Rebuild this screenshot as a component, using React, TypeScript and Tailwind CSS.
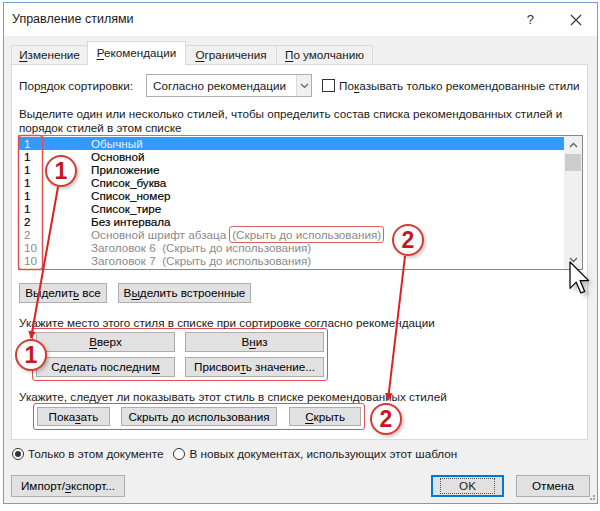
import React from "react";

const BTN =
  "h-[20px] border border-[#adadad] bg-[#e1e1e1] text-black flex items-center justify-center leading-none whitespace-nowrap";

function U({ children }: { children: React.ReactNode }) {
  return <span className="underline underline-offset-2">{children}</span>;
}

const ROWS: { n: string; name: string; note?: string; tone: "sel" | "dark" | "gray"; box?: boolean }[] = [
  { n: "1", name: "Обычный", tone: "sel" },
  { n: "1", name: "Основной", tone: "dark" },
  { n: "1", name: "Приложение", tone: "dark" },
  { n: "1", name: "Список_буква", tone: "dark" },
  { n: "1", name: "Список_номер", tone: "dark" },
  { n: "1", name: "Список_тире", tone: "dark" },
  { n: "2", name: "Без интервала", tone: "dark" },
  { n: "2", name: "Основной шрифт абзаца", note: "(Скрыть до использования)", tone: "gray", box: true },
  { n: "10", name: "Заголовок 6", note: "  (Скрыть до использования)", tone: "gray" },
  { n: "10", name: "Заголовок 7", note: "  (Скрыть до использования)", tone: "gray" },
];

function Badge({ x, y, label }: { x: number; y: number; label: string }) {
  return (
    <g>
      <circle cx={x + 2} cy={y + 2} r={16} fill="#000" opacity={0.2} filter="url(#blur)" />
      <circle cx={x} cy={y} r={15} fill="#fff" stroke="#d63a32" strokeWidth={2} />
      <text
        x={x}
        y={y + 8}
        textAnchor="middle"
        fontFamily="Liberation Sans, Arial, sans-serif"
        fontWeight={700}
        fontSize={23}
        fill="#c8161d"
      >
        {label}
      </text>
    </g>
  );
}

export default function App() {
  return (
    <div className="relative w-[600px] h-[511px] bg-white font-['Liberation_Sans',Arial,sans-serif] text-[11.7px] text-[#1a1a1a] overflow-hidden">
      {/* Window */}
      <div className="ml-[3px] mt-[2px] w-[595px] h-[502px] border border-[#6b9fd8] flex flex-col">
        {/* Title bar */}
        <div className="h-[33px] bg-white flex items-center pl-[8px] shrink-0">
          <span className="text-[12.5px]">Управление стилями</span>
          <span className="ml-auto text-[13px] text-[#333] mr-[36px]">?</span>
          <svg width="12" height="12" viewBox="0 0 12 12" className="mr-[15px]">
            <path d="M1 1 L11 11 M11 1 L1 11" stroke="#333" strokeWidth="1.1" />
          </svg>
        </div>

        {/* Body */}
        <div className="flex-1 bg-[#f0f0f0] pt-[5px] px-[7px] flex flex-col">
          {/* Tabs */}
          <div className="flex items-end h-[23px] relative z-10 whitespace-nowrap">
            <div className="h-[20px] w-[76px] border border-[#d9d9d9] border-r-0 bg-[#f0f0f0] flex items-center justify-center -mb-px">
              <span><U>И</U>зменение</span>
            </div>
            <div className="h-[24px] w-[99px] border border-[#d9d9d9] border-b-0 bg-white flex items-center justify-center -mb-px pb-[2px]">
              <span><U>Р</U>екомендации</span>
            </div>
            <div className="h-[20px] w-[91px] border border-[#d9d9d9] border-l-0 bg-[#f0f0f0] flex items-center justify-center -mb-px">
              <span><U>О</U>граничения</span>
            </div>
            <div className="h-[20px] w-[96px] border border-[#d9d9d9] border-l-0 bg-[#f0f0f0] flex items-center justify-center -mb-px">
              <span><U>П</U>о умолчанию</span>
            </div>
          </div>

          {/* Panel */}
          <div className="w-[577px] h-[376px] border border-[#d9d9d9] bg-white pl-[7px] pt-[9px] whitespace-nowrap">
            <div className="flex items-center h-[23px]">
              <span className="w-[127px]">
                Пор<U>я</U>док сортировки:
              </span>
              <div className="w-[166px] h-[23px] border border-[#abadb3] flex">
                <span className="flex-1 pl-[6px] flex items-center">Согласно рекомендации</span>
                <span className="w-[15px] border-l border-[#d9d9d9] bg-[#f0f0f0] flex items-center justify-center">
                  <svg width="9" height="6" viewBox="0 0 9 6">
                    <path d="M1 1 L4.5 4.5 L8 1" stroke="#606060" strokeWidth="1.2" fill="none" />
                  </svg>
                </span>
              </div>
              <span className="ml-[10px] w-[13px] h-[13px] border border-[#333] bg-white" />
              <span className="ml-[4px]">
                По<U>к</U>азывать только рекомендованные стили
              </span>
            </div>

            <p className="mt-[10px] leading-[14px]">
              Выделите один или несколько стилей, чтобы определить состав списка рекомендованных стилей и
              <br />
              порядок стилей в этом списке
            </p>

            {/* Listbox */}
            <div className="-ml-px w-[565px] h-[135px] border border-[#828790] flex">
              <div className="flex-1 pt-px">
                {ROWS.map((r, i) => (
                  <div
                    key={i}
                    className={
                      "h-[13px] flex items-center leading-none " +
                      (r.tone === "sel"
                        ? "bg-[#3399ff] text-[#eaf4ff]"
                        : r.tone === "dark"
                          ? "text-black [-webkit-text-stroke:0.15px_#000]"
                          : "text-[#8a8a8a]")
                    }
                  >
                    <span className="w-[72px] pl-[5px]">{r.n}</span>
                    <span className="whitespace-pre">{r.name}</span>
                    {r.note &&
                      (r.box ? (
                        <span className="ml-[3px] px-[2px] border-[1.5px] border-[#e06060] rounded-[3px] h-[17px] flex items-center">
                          {r.note}
                        </span>
                      ) : (
                        <span className="whitespace-pre">{r.note}</span>
                      ))}
                  </div>
                ))}
              </div>
              <div className="w-[18px] bg-[#f0f0f0] flex flex-col items-center">
                <svg width="9" height="6" viewBox="0 0 9 6" className="mt-[6px]">
                  <path d="M1 5 L4.5 1.5 L8 5" stroke="#606060" strokeWidth="1.3" fill="none" />
                </svg>
                <div className="mt-[6px] w-[16px] h-[17px] bg-[#cdcdcd]" />
                <svg width="9" height="6" viewBox="0 0 9 6" className="mt-auto mb-[6px]">
                  <path d="M1 1 L4.5 4.5 L8 1" stroke="#606060" strokeWidth="1.3" fill="none" />
                </svg>
              </div>
            </div>

            <div className="mt-[13px] flex gap-[11px]">
              <button className={BTN + " w-[88px]"}>
                <span>Выделит<U>ь</U> все</span>
              </button>
              <button className={BTN + " w-[133px]"}>
                <span>В<U>ы</U>делить встроенные</span>
              </button>
            </div>

            <p className="mt-[14px] leading-[11px]">
              Укажите место этого стиля в списке при сортировке согласно рекомендации
            </p>
            <div className="ml-[13px] w-[296px] border-[1.5px] border-[#e05050] rounded-[3px] p-[3px] grid grid-cols-2 gap-x-[10px] gap-y-[5px]">
              <button className={BTN}>
                <span><U>В</U>верх</span>
              </button>
              <button className={BTN}>
                <span>В<U>н</U>из</span>
              </button>
              <button className={BTN}>
                <span>Сделать последни<U>м</U></span>
              </button>
              <button className={BTN}>
                <span>Присвои<U>т</U>ь значение...</span>
              </button>
            </div>

            <p className="mt-[10px] leading-[12px]">
              Укажите, следует ли показывать этот стиль в списке рекомендованных стилей
            </p>
            <div className="ml-[14px] w-[332px] h-[27px] border-[1.5px] border-[#e05050] rounded-[3px] px-[3px] flex items-center">
              <button className={BTN + " !h-[19px] w-[73px]"}>
                <span>Пока<U>з</U>ать</span>
              </button>
              <button className={BTN + " !h-[19px] w-[157px] ml-[11px]"}>
                <span>Скрыть <U>д</U>о использования</span>
              </button>
              <button className={BTN + " !h-[19px] w-[72px] ml-[12px]"}>
                <span><U>С</U>крыть</span>
              </button>
            </div>
          </div>

          {/* Radios */}
          <div className="mt-[7px] h-[14px] flex items-center whitespace-nowrap">
            <span className="ml-px w-[12px] h-[12px] rounded-full border border-[#333] bg-white flex items-center justify-center">
              <span className="w-[6px] h-[6px] rounded-full bg-[#333]" />
            </span>
            <span className="ml-[4px]">Только в этом документе</span>
            <span className="ml-[9px] w-[12px] h-[12px] rounded-full border border-[#333] bg-white" />
            <span className="ml-[5px]">В новых документах, использующих этот шаблон</span>
          </div>

          {/* Footer buttons */}
          <div className="mt-[14px] flex items-center">
            <button className={BTN + " !h-[22px] w-[114px]"}>
              <span>Импорт/<U>э</U>кспорт...</span>
            </button>
            <button className="ml-auto h-[22px] w-[73px] border-2 border-[#0078d7] bg-[#e1e1e1] flex items-center justify-center">
              <span className="px-[18px] outline outline-1 outline-dotted outline-[#555] leading-[14px]">OK</span>
            </button>
            <button className={BTN + " !h-[22px] w-[74px] ml-[12px]"}>Отмена</button>
          </div>
        </div>
      </div>

      {/* Annotations */}
      <svg className="absolute inset-0 pointer-events-none" width="600" height="511" viewBox="0 0 600 511">
        <defs>
          <filter id="blur" x="-50%" y="-50%" width="200%" height="200%">
            <feGaussianBlur stdDeviation="1.5" />
          </filter>
          <marker id="ah" markerWidth="8" markerHeight="8" refX="7" refY="4" orient="auto" markerUnits="userSpaceOnUse">
            <path d="M0 0 L8 4 L0 8 Z" fill="#e02020" />
          </marker>
        </defs>
        {/* column box */}
        <rect x="18.5" y="135.5" width="24" height="134" rx="3" fill="none" stroke="#e05050" strokeWidth="1.5" />
        <line x1="58" y1="187" x2="31" y2="338" stroke="#e02020" strokeWidth="2" markerEnd="url(#ah)" />
        <line x1="405" y1="256" x2="388" y2="400" stroke="#e02020" strokeWidth="2" markerEnd="url(#ah)" />
        <Badge x={61} y={171} label="1" />
        <Badge x={31} y={355} label="1" />
        <Badge x={408} y={240} label="2" />
        <Badge x={386} y={419} label="2" />
        {/* resize grip */}
        <g fill="#a0a0a0">
          <rect x="593" y="498" width="2" height="2" />
          <rect x="590" y="498" width="2" height="2" />
          <rect x="593" y="495" width="2" height="2" />
        </g>
        {/* mouse cursor */}
        <g transform="translate(570 262) scale(1.55)">
          <path d="M1 1 L1 18 L5 14 L8 21 L11 20 L8 13 L13 13 Z" fill="#000" opacity="0.25" filter="url(#blur)" transform="translate(1.5 1.5)" />
          <path d="M0 0 L0 17 L4 13 L7 20 L9.5 19 L6.5 12 L12 12 Z" fill="#fff" stroke="#000" strokeWidth="0.8" strokeLinejoin="round" />
        </g>
      </svg>
    </div>
  );
}
